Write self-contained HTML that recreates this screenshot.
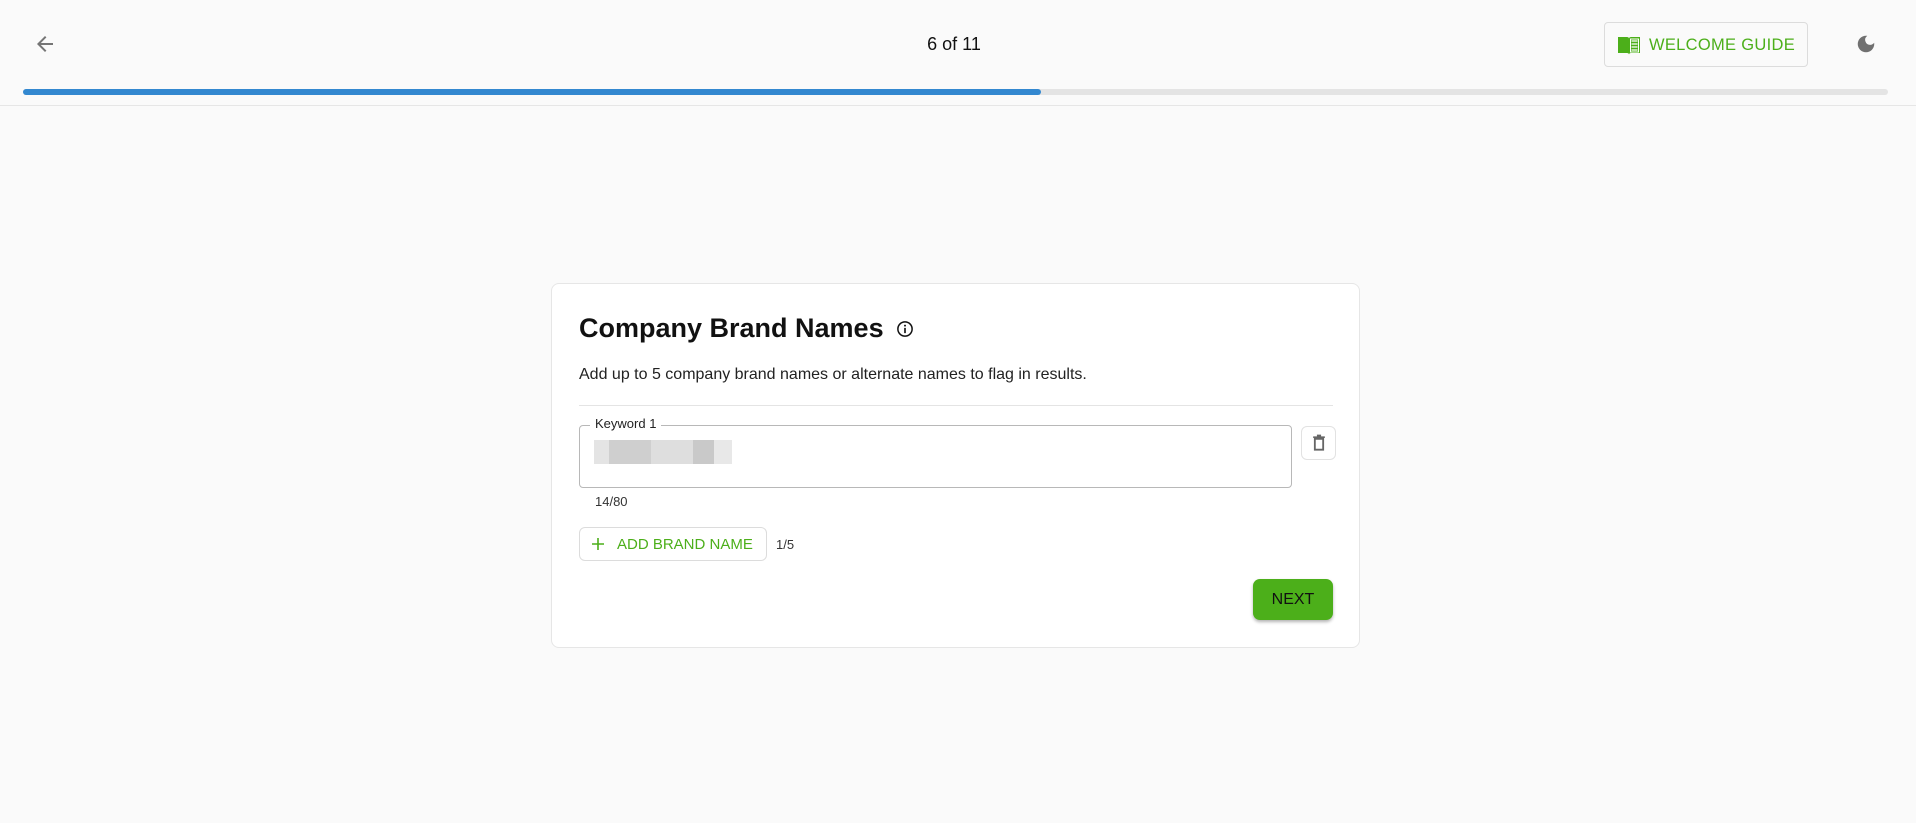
<!DOCTYPE html>
<html><head><meta charset="utf-8"><style>
*{box-sizing:border-box;margin:0;padding:0}
body{width:1916px;height:823px;background:#fafafa;font-family:"Liberation Sans",Arial,sans-serif;position:relative;overflow:hidden;color:#111}
.a{position:absolute}
</style></head><body>
<svg class="a" style="left:33px;top:32px" width="24" height="24" viewBox="0 0 24 24"><path d="M20 11H7.83l5.59-5.59L12 4l-8 8 8 8 1.41-1.41L7.83 13H20v-2z" fill="#757575"/></svg>
<div class="a" style="left:900px;top:34px;width:108px;text-align:center;font-size:18px;color:#111">6 of 11</div>
<div class="a" style="left:1604px;top:22px;width:204px;height:45px;border:1px solid #dcdcdc;border-radius:4px;background:#fafafa"></div>
<svg class="a" style="left:1617px;top:34px" width="24" height="22" viewBox="0 0 24 22"><path d="M1 3h9c1 0 2 .6 2 1.5C12 3.6 13 3 14 3h9v16h-9c-1 0-2 .5-2 1.5 0-1-1-1.5-2-1.5H1z" fill="#4caf1a"/><path d="M14.5 7h6M14.5 10h6M14.5 13h6M14.5 16h6" stroke="#fff" stroke-width="1.2"/><path d="M13.5 5h8v13h-8z" fill="none" stroke="#fff" stroke-width="1"/></svg>
<div class="a" style="left:1649px;top:36px;font-size:16.5px;color:#4caf1a;letter-spacing:.3px">WELCOME GUIDE</div>
<svg class="a" style="left:1855px;top:33px" width="22" height="22" viewBox="0 0 24 24"><path d="M12 3a9 9 0 1 0 9 9c0-.46-.04-.92-.1-1.360a5.39 5.39 0 0 1-4.4 2.26 5.4 5.4 0 0 1-3.14-9.8c-.44-.06-.9-.1-1.360-.1z" fill="#707070"/></svg>
<div class="a" style="left:23px;top:89px;width:1865px;height:6px;border-radius:3px;background:#e4e4e4"></div>
<div class="a" style="left:23px;top:89px;width:1018px;height:6px;border-radius:3px;background:#3388d0"></div>
<div class="a" style="left:0;top:105px;width:1916px;height:1px;background:#e6e6e6"></div>

<div class="a" style="left:551px;top:283px;width:809px;height:365px;background:#fff;border:1px solid #e6e6e6;border-radius:8px"></div>
<div class="a" style="left:579px;top:313px;font-size:27px;font-weight:bold;color:#111">Company Brand Names</div>
<svg class="a" style="left:896px;top:320px" width="18" height="18" viewBox="0 0 24 24"><circle cx="12" cy="12" r="9.5" fill="none" stroke="#111" stroke-width="2"/><path d="M12 10.5v7" stroke="#111" stroke-width="2.2"/><circle cx="12" cy="7.5" r="1.3" fill="#111"/></svg>
<div class="a" style="left:579px;top:366px;font-size:16px;color:#222">Add up to 5 company brand names or alternate names to flag in results.</div>
<div class="a" style="left:579px;top:405px;width:754px;height:1px;background:#e4e4e4"></div>
<div class="a" style="left:579px;top:425px;width:713px;height:63px;border:1px solid #b8b8b8;border-radius:4px"></div>
<div class="a" style="left:590px;top:416px;padding:0 5px;background:#fff;font-size:13px;color:#222">Keyword 1</div>
<div class="a" style="left:594px;top:440px;width:15px;height:24px;background:#e4e4e4"></div>
<div class="a" style="left:609px;top:440px;width:42px;height:24px;background:#cfcfcf"></div>
<div class="a" style="left:651px;top:440px;width:42px;height:24px;background:#dedede"></div>
<div class="a" style="left:693px;top:440px;width:21px;height:24px;background:#c9c9c9"></div>
<div class="a" style="left:714px;top:440px;width:18px;height:24px;background:#e8e8e8"></div>
<div class="a" style="left:1301px;top:426px;width:35px;height:34px;border:1px solid #e2e2e2;border-radius:6px"></div>
<svg class="a" style="left:1309px;top:433px" width="20" height="20" viewBox="0 0 24 24"><path d="M7 7h10v13H7z" fill="none" stroke="#666" stroke-width="2.2"/><path d="M5 5h14M9.5 3h5" stroke="#666" stroke-width="2"/></svg>
<div class="a" style="left:595px;top:494px;font-size:13px;color:#333">14/80</div>
<div class="a" style="left:579px;top:527px;width:188px;height:34px;border:1px solid #dcdcdc;border-radius:6px"></div>
<svg class="a" style="left:590px;top:536px" width="16" height="16" viewBox="0 0 16 16"><path d="M8 2v12M2 8h12" stroke="#4caf1a" stroke-width="1.6"/></svg>
<div class="a" style="left:617px;top:536px;font-size:15px;color:#4caf1a">ADD BRAND NAME</div>
<div class="a" style="left:776px;top:537px;font-size:13px;color:#333">1/5</div>
<div class="a" style="left:1253px;top:579px;width:80px;height:41px;background:#4caf1a;border-radius:7px;box-shadow:0 2px 3px rgba(0,0,0,.3);text-align:center;line-height:41px;font-size:16px;color:#111">NEXT</div>
</body></html>
